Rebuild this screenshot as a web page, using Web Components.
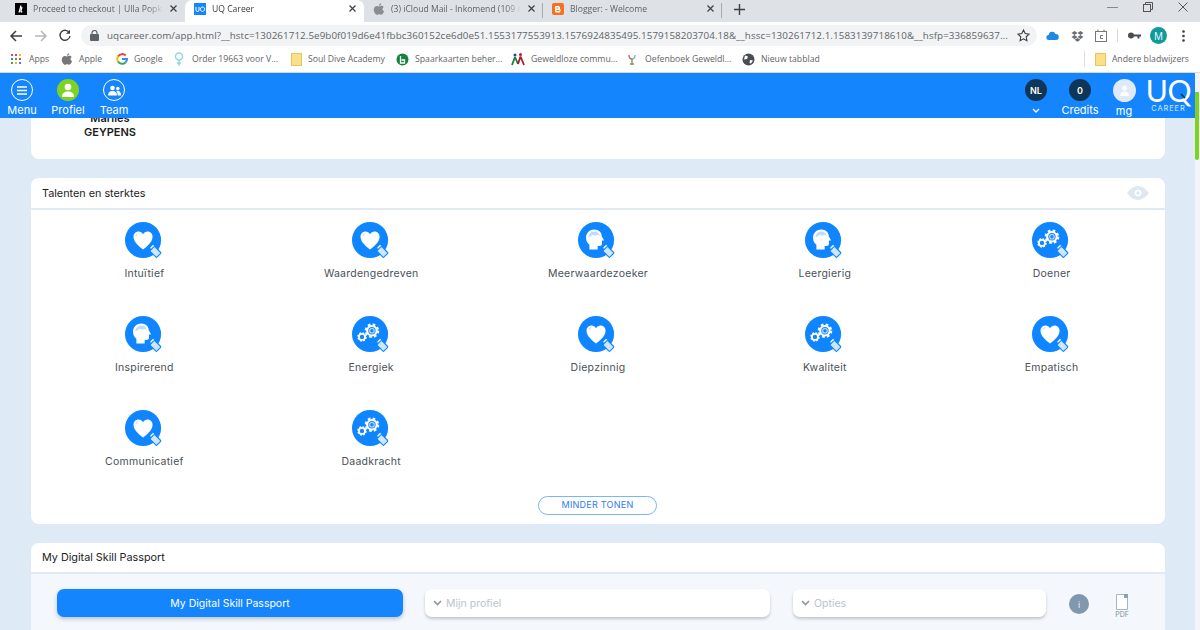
<!DOCTYPE html>
<html lang="nl">
<head>
<meta charset="utf-8">
<title>UQ Career</title>
<style>
html,body{margin:0;height:630px;overflow:hidden;background:#dfeaf7;font-family:"Open Sans","Liberation Sans",sans-serif;}
body{display:flex;flex-direction:column;}
</style>
</head>
<body>
<browser-tabs>
  <browser-tab title-text="Proceed to checkout | Ulla Popke" icon="ulla"></browser-tab>
  <browser-tab title-text="UQ Career" icon="uq" active></browser-tab>
  <browser-tab title-text="(3) iCloud Mail - Inkomend (109 ongelezen)" icon="apple"></browser-tab>
  <browser-tab title-text="Blogger: - Welcome" icon="blogger"></browser-tab>
</browser-tabs>
<browser-toolbar url="uqcareer.com/app.html?__hstc=130261712.5e9b0f019d6e41fbbc360152ce6d0e51.1553177553913.1576924835495.1579158203704.18&amp;__hssc=130261712.1.1583139718610&amp;__hsfp=336859637..."></browser-toolbar>
<bookmark-bar>
  <book-mark icon="apps" w="50" style="gap:8px">Apps</book-mark>
  <book-mark icon="apple" w="55">Apple</book-mark>
  <book-mark icon="google" w="58">Google</book-mark>
  <book-mark icon="pin" w="117" style="gap:8px">Order 19663 voor V...</book-mark>
  <book-mark icon="folder" w="105">Soul Dive Academy</book-mark>
  <book-mark icon="leaf" w="115">Spaarkaarten beher...</book-mark>
  <book-mark icon="people" w="116">Geweldloze commu...</book-mark>
  <book-mark icon="flower" w="115" style="gap:8px">Oefenboek Geweldl...</book-mark>
  <book-mark icon="globe" w="120">Nieuw tabblad</book-mark>
  <span slot="right"><book-mark icon="folder">Andere bladwijzers</book-mark></span>
</bookmark-bar>
<app-shell>
  <app-header></app-header>
  <name-card>Marlies<br>GEYPENS</name-card>
  <section-card heading="Talenten en sterktes" eye>
    <talent-grid>
      <talent-item kind="heart">Intuïtief</talent-item>
      <talent-item kind="heart">Waardengedreven</talent-item>
      <talent-item kind="head">Meerwaardezoeker</talent-item>
      <talent-item kind="head">Leergierig</talent-item>
      <talent-item kind="gears">Doener</talent-item>
      <talent-item kind="head">Inspirerend</talent-item>
      <talent-item kind="gears">Energiek</talent-item>
      <talent-item kind="heart">Diepzinnig</talent-item>
      <talent-item kind="gears">Kwaliteit</talent-item>
      <talent-item kind="heart">Empatisch</talent-item>
      <talent-item kind="heart">Communicatief</talent-item>
      <talent-item kind="gears">Daadkracht</talent-item>
    </talent-grid>
  </section-card>
  <section-card heading="My Digital Skill Passport" tinted>
    <passport-row></passport-row>
  </section-card>
</app-shell>

<script>
const UI_FONT = '"Open Sans","Liberation Sans",sans-serif';
const APP_FONT = 'Inter,"DejaVu Sans",sans-serif';

const appleIcon = c => `<svg width="12" height="13" viewBox="0 0 12 13"><path fill="${c}" d="M8.2 0.3c0.1 1-0.8 2.4-2.2 2.4C5.900 1.500 7 0.400 8.200 0.300zM6 3.400c0.600 0 1.300-0.600 2.400-0.600 0.900 0 1.800 0.500 2.300 1.200-1.800 1.100-1.500 3.500 0.400 4.300-0.500 1.400-1.600 3.400-2.800 3.400-0.800 0-1.100-0.500-2.100-0.500s-1.400 0.500-2.100 0.500C2.400 11.700 0.800 9 0.800 6.700c0-2.300 1.500-3.800 3-3.800 1 0 1.700 0.500 2.200 0.500z"/></svg>`;

const favicons = {
  ulla: `<svg width="12" height="12"><rect width="12" height="12" fill="#000"/><path d="M4 9.500 6 2.500M7 4 5.800 8.500q0 1 1.500 0" stroke="#fff" stroke-width="1.200" fill="none"/></svg>`,
  uq: `<svg width="12" height="12"><rect width="12" height="12" fill="#1585fe"/><path d="M2 4v3q0 1.500 1.500 1.500T5 7V4M8.500 4a2.200 2.200 0 1 0 .01 0z" stroke="#fff" stroke-width="1" fill="none"/></svg>`,
  apple: appleIcon('#8a8d91'),
  blogger: `<svg width="12" height="12"><rect width="12" height="12" rx="2" fill="#f4711f"/><path d="M4 3h2.500q1.500 0 1.500 2v1h.5v2q0 1.500-1.500 1.500H4.500Q3 9.500 3 8V4q0-1 1-1z" fill="#fff"/><path d="M4.500 5h2M4.500 7.500h3" stroke="#f4711f" stroke-width="1"/></svg>`
};

const bookmarkIcons = {
  apps: `<svg width="10" height="10" viewBox="0 0 10 10">${[['#e9473a',0,0],['#e9473a',4,0],['#f3b51c',8,0],['#3a7ff0',0,4],['#34a853',4,4],['#e9473a',8,4],['#34a853',0,8],['#f3b51c',4,8],['#3a7ff0',8,8]].map(a=>`<rect x="${a[1]}" y="${a[2]}" width="2" height="2" fill="${a[0]}"/>`).join('')}</svg>`,
  apple: appleIcon('#777'),
  google: `<svg width="12" height="12" viewBox="0 0 12 12" fill="none" stroke-width="2"><path d="M9.700 2.500A5 5 0 0 0 2 3.500" stroke="#ea4335"/><path d="M2 3.500a5 5 0 0 0 0 5" stroke="#fbbc05"/><path d="M2 8.500a5 5 0 0 0 7.500 1" stroke="#34a853"/><path d="M9.500 9.500Q11 8 11 6H6" stroke="#4285f4"/></svg>`,
  pin: `<svg width="10" height="14" viewBox="0 0 10 14" fill="none" stroke="#8fd6e6" stroke-width="1.400"><circle cx="5" cy="4.500" r="3.500"/><path d="M5 8v6M3 11h4"/></svg>`,
  folder: `<svg width="11" height="13"><rect x=".5" y=".5" width="10" height="12" fill="#fbe08c" stroke="#e6c55f"/></svg>`,
  leaf: `<svg width="13" height="13" viewBox="0 0 13 13"><circle cx="6.500" cy="6.500" r="6" fill="#13833c"/><path d="M4.500 3v7h4V7h-3" stroke="#fff" stroke-width="1.300" fill="none"/></svg>`,
  people: `<svg width="14" height="14" viewBox="0 0 14 14" fill="none" stroke-width="1.800"><circle cx="4" cy="3" r="1.500" fill="#2a3f9a"/><circle cx="9.500" cy="2.500" r="1.500" fill="#b3202b"/><path d="M4 5 1 13M4 5l3 7" stroke="#1d7d3a"/><path d="M9.500 4.500 7 12M9.500 4.500 13 13" stroke="#a81c2a"/></svg>`,
  flower: `<svg width="10" height="13" viewBox="0 0 10 13" fill="none" stroke-width="1.400"><path d="M2 2q0 4 3 4" stroke="#d8624e"/><path d="M8 2Q8 6 5 6" stroke="#7fb6d5"/><path d="M5 6v6M3 11h4" stroke="#7da05a"/></svg>`,
  globe: `<svg width="13" height="13" viewBox="0 0 13 13"><circle cx="6.500" cy="6.500" r="6" fill="#4a4e52"/><path d="M3 2.500l3 1-1 2.500-3 .5zM8 7l3 .5-2 3-1.500-.5z" fill="#fff"/></svg>`
};

function define(name, css, html, extra) {
  customElements.define(name, class extends HTMLElement {
    connectedCallback() {
      if (this.shadowRoot) return;
      const root = this.attachShadow({mode: 'open'});
      root.innerHTML = `<style>${css}</style>${typeof html === 'function' ? html(this) : html}`;
      if (extra) extra(this, root);
    }
  });
}

define('browser-tabs', `
  :host{display:flex;height:22px;background:#dee1e6;padding-left:6px;font:8.600px ${UI_FONT};flex:none}
  .plus{margin-left:8px;width:18px;height:18px;display:flex;align-items:center;justify-content:center}
  .win{margin-left:auto;display:flex;align-items:flex-start;padding:0 10px 0 0;gap:21px;color:#555}
  svg{display:block}
`, `<slot></slot><span class="plus"><svg width="11" height="11" stroke="#3c4043" stroke-width="1.400"><path d="M5.500 0v11M0 5.500h11"/></svg></span>
  <div class="win">
    <svg width="14" height="14"><path d="M1 7.500h11" stroke="#888"/></svg>
    <svg width="14" height="14" fill="none" stroke="#555"><rect x="2.500" y="4.500" width="7" height="7"/><path d="M4.500 4.500v-2h7v7h-2"/></svg>
    <svg width="14" height="14" stroke="#555"><path d="M2.500 2.500l9 9M11.500 2.500l-9 9"/></svg>
  </div>`);

define('browser-tab', `
  :host{display:flex;align-items:center;width:179px;height:22px;box-sizing:border-box;padding:0 6px 4px 9px;gap:6px;color:#5f6368;position:relative}
  :host([active]){background:#fff;border-radius:7px 7px 0 0;color:#3c4043}
  .fav{display:flex;flex:none}
  .t{flex:1;white-space:nowrap;overflow:hidden;-webkit-mask-image:linear-gradient(90deg,#000 88%,transparent)}
  .x{flex:none;display:flex}
  .sep{position:absolute;right:0;top:3px;height:15px;width:1px;background:#a9abae}
  :host([active]) .sep,:host(:first-child) .sep{display:none}
`, el => `<span class="fav">${favicons[el.getAttribute('icon')]}</span>
  <span class="t">${el.getAttribute('title-text')}</span>
  <span class="x"><svg width="10" height="10" stroke="#3c4043" stroke-width="1.200"><path d="M1.500 1.500l6 6M7.500 1.500l-6 6"/></svg></span>
  <span class="sep"></span>`);

define('browser-toolbar', `
  :host{display:flex;align-items:center;height:24px;box-sizing:border-box;padding-top:3px;background:#fff;flex:none;font:9.800px ${UI_FONT};color:#5f6368}
  .nav{display:flex;width:81px;padding-left:8px;box-sizing:border-box;gap:9px}
  .omni{width:956px;height:21px;background:#f1f3f4;border-radius:11px;display:flex;align-items:center;box-sizing:border-box;padding:0 7px 0 9px;gap:8px}
  .url{flex:1;white-space:nowrap;overflow:hidden;letter-spacing:.08px}
  .ext{flex:1;display:flex;align-items:center;padding-left:9px}
  .line{width:1px;height:13px;background:#d5d7da;flex:none}
  svg{display:block;flex:none}
  .m{width:17px;height:17px;border-radius:50%;background:#0f9a9c;color:#fff;font-size:10px;display:flex;align-items:center;justify-content:center;flex:none}
`, el => `<div class="nav">
    <svg width="16" height="14" fill="none" stroke="#3c4043" stroke-width="1.500"><path d="M14 7H3M8 2 3 7l5 5"/></svg>
    <svg width="16" height="14" fill="none" stroke="#b5b7ba" stroke-width="1.500"><path d="M2 7h11M8 2l5 5-5 5"/></svg>
    <svg width="14" height="14" fill="none" stroke="#3c4043" stroke-width="1.400"><path d="M11.500 4A5 5 0 1 0 12 7"/><path d="M12 .8v4H8" stroke-width="0" fill="#3c4043"/></svg>
  </div>
  <div class="omni">
    <svg width="9" height="11"><rect y="4" width="9" height="7" rx="1" fill="#5f6368"/><path d="M2 4.500V3a2.500 2.500 0 0 1 5 0v1.500" fill="none" stroke="#5f6368" stroke-width="1.200"/></svg>
    <span class="url">${el.getAttribute('url').replace(/&/g,'&amp;')}</span>
    <svg width="13" height="13" fill="none" stroke="#3c4043" stroke-width="1.100"><path d="M6.500 1l1.700 3.600 3.800.5-2.800 2.700.7 3.900-3.400-1.900-3.400 1.900.7-3.900L1 5.100l3.800-.5z"/></svg>
  </div>
  <div class="ext">
    <svg width="13" height="11"><path d="M3 10a2.500 2.500 0 0 1-.3-5A3.500 3.500 0 0 1 9.500 4 3 3 0 0 1 10 10z" fill="#1e88e5"/></svg>
    <svg style="margin-left:12px" width="13" height="12" fill="#6a6e73"><path d="M3.500 1 .5 3l3 2 3-2zM9.500 1l-3 2 3 2 3-2zM3.500 5l-3 2 3 2 3-2zM9.500 5l-3 2 3 2 3-2zM3.500 9.800l3 1.900 3-1.900-3-1.800z"/></svg>
    <svg style="margin-left:11px" width="13" height="13" fill="none" stroke="#777"><rect x=".5" y="2.500" width="11" height="10"/><path d="M8 6.500H5.500v3H8M3 .5v2M9 .5v2"/></svg>
    <span class="line" style="margin-left:9px"></span>
    <svg style="margin-left:10px" width="13" height="7" fill="#4a4e52"><circle cx="3" cy="3.500" r="3"/><path d="M4 2.500h9v2h-1.500v2h-2v-2H4z"/></svg>
    <span class="m" style="margin-left:9px">M</span>
    <svg style="margin-left:15px" width="3" height="12" fill="#3c4043"><circle cx="1.500" cy="1.500" r="1.300"/><circle cx="1.500" cy="6" r="1.300"/><circle cx="1.500" cy="10.500" r="1.300"/></svg>
  </div>`);

define('bookmark-bar', `
  :host{display:flex;align-items:center;height:27px;background:#fff;flex:none;padding-left:11px;box-sizing:border-box;border-bottom:1px solid #d6dbe1}
  .right{margin-left:auto;display:flex;align-items:center;height:16px;border-left:1px solid #dcdfe3;padding:0 11px 0 10px}
`, `<slot></slot><div class="right"><slot name="right"></slot></div>`);

define('book-mark', `
  :host{display:flex;align-items:center;gap:6px;font:8.700px ${UI_FONT};color:#5f6368;white-space:nowrap;flex:none}
  svg{display:block}
  .i{display:flex;justify-content:center;min-width:10px}
`, el => {
  if (el.getAttribute('w')) el.style.width = el.getAttribute('w') + 'px';
  return `<span class="i">${bookmarkIcons[el.getAttribute('icon')]}</span><slot></slot>`;
});

define('app-shell', `
  :host{display:flex;flex:1;min-height:0}
  .col{width:1195px;display:flex;flex-direction:column;gap:19px;min-height:0;overflow:hidden;background:#dfeaf7}
  .bar{flex:1;background:#f1f5fb;padding-top:19px}
  .thumb{height:68px;background:#7ed321;border-radius:0 0 2px 2px;width:4px}
`, `<div class="col"><slot></slot></div><div class="bar"><div class="thumb"></div></div>`);

define('app-header', `
  :host{display:flex;height:45px;background:#1585fe;flex:none;color:#fff;font:400 11px ${APP_FONT};margin-bottom:-19px;position:relative;z-index:2}
  .left{display:flex;gap:2px}
  .right{margin-left:auto;display:flex;padding-right:7px}
  .n{width:44px;height:45px;display:flex;flex-direction:column;align-items:center;box-sizing:border-box;padding-top:6px;white-space:nowrap}
  .c{width:22px;height:22px;border-radius:50%;box-sizing:border-box;display:flex;align-items:center;justify-content:center;flex:none}
  .w{border:1.500px solid #fff}
  .g{background:#7ed321}
  .d{background:#0f3557;font-weight:600;font-size:9px}
  .u{background:#dfeaf8;width:23px;height:23px}
  .l{margin-top:2px;line-height:14px}
  .logo{width:39px;display:flex;flex-direction:column;align-items:center;margin-left:3px;padding-top:5px;position:relative}
  .uq{font:400 30px/24px Lato,${UI_FONT};letter-spacing:-.2px;height:24px}
  .car{font:400 7.500px/9px ${APP_FONT};letter-spacing:.85px;color:#d7e9ff;margin-top:2px}
  .tail{position:absolute;left:31px;top:20px}
  svg{display:block}
`, `<div class="left">
    <div class="n"><div class="c w"><svg width="10" height="9" stroke="#fff" stroke-width="1.400"><path d="M0 1h10M0 4.500h10M0 8h10"/></svg></div><div class="l">Menu</div></div>
    <div class="n"><div class="c g"><svg width="14" height="14" fill="#fff"><circle cx="7" cy="4" r="3.300"/><path d="M1 14q0-5.500 6-5.500t6 5.500z"/></svg></div><div class="l">Profiel</div></div>
    <div class="n"><div class="c w"><svg width="13" height="11" fill="#fff"><circle cx="4.500" cy="3" r="2.300"/><circle cx="9.800" cy="3.500" r="1.800"/><path d="M0 10.500Q0 6 4.500 6T9 10.500zM9.800 10.500q0-3-1.700-4.500 4.900-1 4.900 4.500z"/></svg></div><div class="l">Team</div></div>
  </div>
  <div class="right">
    <div class="n"><div class="c d">NL</div><svg style="margin-top:7px" width="8" height="5" fill="none" stroke="#fff" stroke-width="1.300"><path d="M1 1l3 3 3-3"/></svg></div>
    <div class="n"><div class="c d">0</div><div class="l">Credits</div></div>
    <div class="n"><div class="c u"><svg width="11" height="11" fill="#fff"><circle cx="5.500" cy="3" r="2.500"/><path d="M1 11q0-4.500 4.500-4.500T10 11z"/></svg></div><div class="l">mg</div></div>
    <div class="logo"><span class="uq">UQ</span><span class="car">CAREER</span><svg class="tail" width="6" height="6" stroke="#14324f" stroke-width="1.600"><path d="M1 1l4 4"/></svg></div>
  </div>`);

define('name-card', `
  :host{display:flex;align-items:flex-end;height:41px;flex:none;margin:0 0 0 31px;width:1134px;box-sizing:border-box;background:#fff;border-radius:0 0 8px 8px;padding:0 0 20px 31px;overflow:hidden}
  .n{width:96px;text-align:center;font:600 11px/14px ${APP_FONT};color:#1c1c1c}
`, `<div class="n"><slot></slot></div>`);

define('section-card', `
  :host{display:block;flex:none;margin-left:31px;width:1134px;background:#fff;border-radius:8px 8px 0 0;overflow:hidden}
  :host(:not([tinted])){border-radius:8px}
  .h{display:flex;align-items:center;padding:0 16px 0 11px;box-sizing:border-box;border-bottom:2px solid #e1e9f3;font:400 10.800px ${APP_FONT};color:#222;height:32px;justify-content:space-between}
  :host([tinted]) .h{height:31px}
  :host([tinted]) .b{background:#f4f8fd}
`, el => `<div class="h"><span>${el.getAttribute('heading')}</span>${el.hasAttribute('eye') ? `<svg width="22" height="14" viewBox="0 0 22 14"><path fill="#dfe8f2" fill-rule="evenodd" d="M0 7Q5 0 11 0t11 7q-5 7-11 7T0 7zm11-3.500a3.500 3.500 0 1 0 .01 0zM11 5.200a1.800 1.800 0 1 1-.01 0z"/></svg>` : ''}</div><div class="b"><slot></slot></div>`);

define('talent-grid', `
  :host{display:block;padding-top:12px}
  .g{display:grid;grid-template-columns:repeat(5,1fr);row-gap:34px}
  .m{display:flex;justify-content:center;padding:26px 0 9px}
  .btn{width:119px;height:19px;box-sizing:border-box;border:1.500px solid #7ab3ff;border-radius:10px;font:400 9px/16px ${APP_FONT};color:#2e7bf6;text-align:center;letter-spacing:.25px;margin-right:1px}
`, `<div class="g"><slot></slot></div><div class="m"><div class="btn">MINDER TONEN</div></div>`);

const lens = `<path d="M26.500 27l3-3 10 10-5 5z" fill="#fff"/><rect x="-5" y="-3.500" width="10" height="7" rx="1" transform="translate(32 31.500) rotate(45)" fill="#cfe6ff" stroke="#0f86ff" stroke-width="1.200"/>`;
const talentGlyphs = {
  heart: `<path fill="#fff" d="M19 29C12 23.500 9 20 9 15.500c0-3.300 2.400-5.500 5.200-5.500 2 0 3.700 1 4.800 3 1.100-2 2.800-3 4.800-3 2.800 0 5.200 2.200 5.200 5.500 0 4.500-3 8-10 13.500z"/><path d="M11.500 15q.2-2.300 2.500-2.800" fill="none" stroke="#cfe5ff" stroke-width="1.200"/>`,
  head: `<path fill="#fff" d="M12 29v-5c-2.500-2-3.500-4.500-3.500-7.500 0-5 4-8.500 8.500-8.500 5 0 8 3.300 8 7l2.500 4.500h-2.300v3.500c0 1.500-1 2.300-2.500 2.300h-2V29z"/><path fill="#bfdcff" d="M11 16c0-3.500 3-6 6-6 3 0 5.500 2 6 5-1.500-1.500-3-1.500-4.500-.5-1.500-1-4-1-5 .5-1 .5-1.500 1-2.500 1z"/>`,
  gears: `<g fill="none" stroke="#fff"><circle cx="21" cy="15.500" r="6.200" stroke-width="3" stroke-dasharray="2.600 2.270"/><circle cx="21" cy="15.500" r="5" stroke-width="2.200"/><circle cx="21" cy="15.500" r="2.400" stroke="#bfdcff" stroke-width="1.200"/><circle cx="10.500" cy="22" r="4" stroke-width="2" stroke-dasharray="1.800 1.340"/><circle cx="10.500" cy="22" r="3.200" stroke-width="1.800"/></g>`
};

define('talent-item', `
  :host{display:flex;flex-direction:column;align-items:center;height:60px;font:400 10.500px/16px ${APP_FONT};color:#4a5158;letter-spacing:.25px;white-space:nowrap}
  svg{display:block;margin-right:1px}
  .l{margin-top:6px}
`, el => `<svg width="40" height="40" viewBox="0 0 40 40"><circle cx="19" cy="19" r="19" fill="#0f86ff"/>${talentGlyphs[el.getAttribute('kind')]}${lens}</svg><div class="l"><slot></slot></div>`);

define('passport-row', `
  :host{display:flex;align-items:flex-start;height:56px;box-sizing:border-box;padding:15px 0 0 26px;font:400 10.500px ${APP_FONT}}
  .btn{width:346px;height:28px;background:#1585fe;border-radius:7px;color:#fff;display:flex;align-items:center;justify-content:center;box-shadow:0 2px 4px rgba(60,90,130,.35)}
  .dd{height:28px;background:#fff;border-radius:7px;box-shadow:0 2px 3px rgba(60,70,90,.28);display:flex;align-items:center;padding-left:8px;gap:4px;color:#bcc3cb;box-sizing:border-box}
  .a{width:345px;margin-left:22px}
  .b{width:253px;margin-left:23px}
  .i{width:20px;height:20px;border-radius:50%;background:#7f98ae;color:#e8eef4;display:flex;align-items:center;justify-content:center;font-size:9px;margin:5px 0 0 23px}
  .p{display:flex;flex-direction:column;align-items:center;margin:5px 0 0 22px;font-size:7px;line-height:9px;color:#7f8e9c;width:22px}
  svg{display:block}
`, `<div class="btn">My Digital Skill Passport</div>
  <div class="dd a"><svg width="9" height="6" fill="none" stroke="#8b97a3" stroke-width="1.600"><path d="M1 1l3.500 3.500L8 1"/></svg>Mijn profiel</div>
  <div class="dd b"><svg width="9" height="6" fill="none" stroke="#8b97a3" stroke-width="1.600"><path d="M1 1l3.500 3.500L8 1"/></svg>Opties</div>
  <div class="i">i</div>
  <div class="p"><svg width="12" height="16" fill="#fff" stroke="#a7b5c2"><path d="M.5.500h8l3 3v12h-11z" stroke-width="1"/><path d="M8 0h4v4H8z" fill="#8fa0b0" stroke="none"/></svg>PDF</div>`);
</script>
</body>
</html>
